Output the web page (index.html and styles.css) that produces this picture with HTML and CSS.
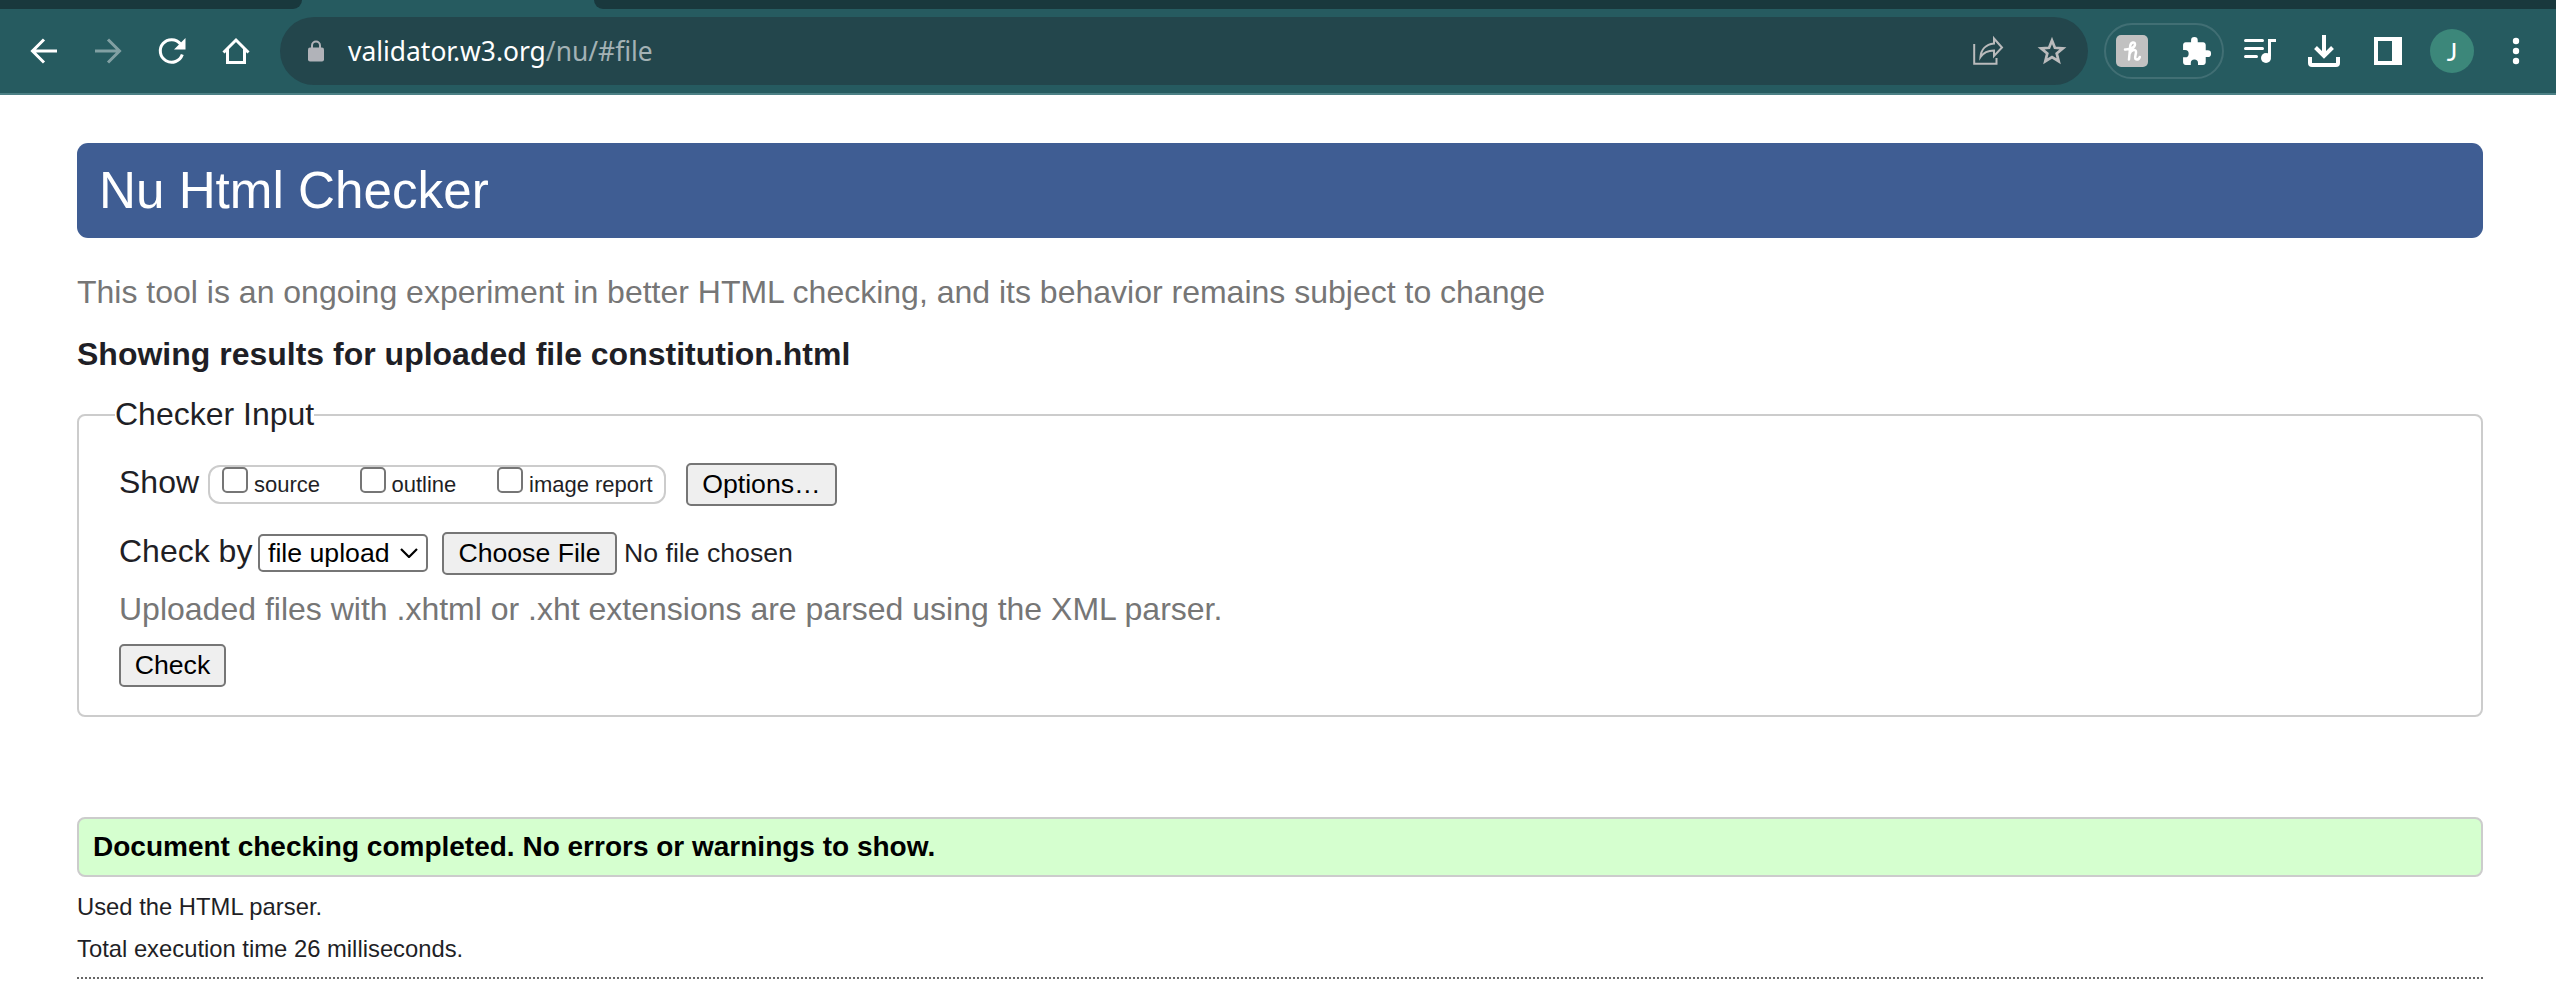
FILE: index.html
```html
<!DOCTYPE html>
<html lang="en">
<head>
<meta charset="utf-8">
<title>Nu Html Checker</title>
<link rel="stylesheet" href="styles.css">
</head>
<body>
<div class="browser">
  <div class="tabstrip"><div class="tab tab-left"></div><div class="tab tab-right"></div></div>
  <div class="toolbar">
    <svg class="nav" viewBox="0 0 32 32"><path d="M29 16H5M16 4.500L4.500 16 16 27.500" fill="none" stroke="#fff" stroke-width="3"/></svg>
    <svg class="nav dim" viewBox="0 0 32 32"><path d="M3 16h24M16 4.500L27.500 16 16 27.500" fill="none" stroke="#fff" stroke-width="3"/></svg>
    <svg class="nav" viewBox="0 0 32 32"><path d="M26.300 19.500A11.300 11.300 0 1 1 24.500 9" fill="none" stroke="#fff" stroke-width="3"/><path d="M29.500 3v11.500H18z" fill="#fff"/></svg>
    <svg class="nav" viewBox="0 0 32 32"><path d="M3.500 17.500L16 5l12.500 12.500M7.500 14v13.500h17V14" fill="none" stroke="#fff" stroke-width="3"/></svg>
    <div class="omnibox">
      <svg class="lock" viewBox="0 0 16 22"><path d="M4 9V5.500a4 4 0 0 1 8 0V9" fill="none" stroke="#b1b3b9" stroke-width="2"/><rect y="7.500" width="16" height="14" rx="2" fill="#b1b3b9"/></svg>
      <span class="url">validator.w3.org<span class="path">/nu/#file</span></span>
      <svg class="share" viewBox="0 0 32 32"><path d="M2.200 9v19.800h22.300V23M22 3.500l8 9-8 8.500v-5.500c-7 0-10.500 2-13.500 6.500.5-7 5-12.500 13.500-13.500z" fill="none" stroke="#babbbc" stroke-width="2"/></svg>
      <svg class="star" viewBox="0 0 32 32"><path d="M16 5.500l2.900 7.300 8 .5-6.200 5.100 2 7.800L16 22l-6.700 4.200 2-7.800-6.200-5.100 8-.5z" fill="none" stroke="#babbbc" stroke-width="2.700"/></svg>
    </div>
    <div class="extensions">
      <svg class="ext" viewBox="0 0 32 32"><rect width="32" height="32" rx="5" fill="#c1c1c1"/><path d="M9 14.500c5 .2 10-1.800 10-5.300 0-2.800-4-2.300-4.700 1.300L13 24.500M13.500 19c1.500-4.500 7-5.500 6.500-1.500-.4 3-2 7 .8 7 1.500 0 2.500-1 3-2.500" fill="none" stroke="#fff" stroke-width="2.500" stroke-linecap="round"/></svg>
      <svg class="ext" viewBox="0 0 24 24"><path transform="translate(.3 .5)" d="M20.500 11H19V7c0-1.100-.9-2-2-2h-4V3.500a2.500 2.500 0 0 0-5 0V5H4c-1.100 0-2 .9-2 2v3.800h1.500a2.700 2.700 0 0 1 0 5.400H2V20c0 1.100.9 2 2 2h3.800v-1.500a2.700 2.700 0 0 1 5.400 0V22H17c1.100 0 2-.9 2-2v-4h1.500a2.500 2.500 0 0 0 0-5z" fill="#fff"/></svg>
    </div>
    <svg class="tool" viewBox="0 0 32 32"><path d="M1.500 5.500h17M1.500 13.500h17M1.500 21.500h11M25.500 21V5.500H32" fill="none" stroke="#fff" stroke-width="3" stroke-linecap="round"/><circle cx="22" cy="23" r="5" fill="#fff"/></svg>
    <svg class="tool" viewBox="0 0 32 32"><path d="M16 0v20M7.500 12.500L16 21l8.500-8.500" fill="none" stroke="#fff" stroke-width="4"/><path d="M2 22v6c0 1.500.5 2 2 2h24c1.500 0 2-.5 2-2v-6" fill="none" stroke="#fff" stroke-width="4"/></svg>
    <svg class="tool" viewBox="0 0 32 32"><path fill="#fff" fill-rule="evenodd" d="M2 2h28v28H2zM6 6v20h14V6z"/></svg>
    <div class="avatar">J</div>
    <svg class="dots" viewBox="0 0 8 32"><circle cx="4" cy="6" r="3.200" fill="#fff"/><circle cx="4" cy="16" r="3.200" fill="#fff"/><circle cx="4" cy="26" r="3.200" fill="#fff"/></svg>
  </div>
</div>
<main class="page">
  <h1 class="title">Nu Html Checker</h1>
  <p class="intro">This tool is an ongoing experiment in better HTML checking, and its behavior remains subject to change</p>
  <h2 class="results-for">Showing results for uploaded file constitution.html</h2>
  <fieldset class="input">
    <legend>Checker Input</legend>
    <div class="row">
      <span class="label show">Show</span>
      <div class="checks">
        <label class="check source"><span class="box"></span>source</label>
        <label class="check outline"><span class="box"></span>outline</label>
        <label class="check"><span class="box"></span>image report</label>
      </div>
      <button class="btn options">Options…</button>
    </div>
    <div class="row second">
      <span class="label by">Check by</span>
      <div class="select">file upload<svg class="chevron" viewBox="0 0 18 10"><path d="M1 1l8 8 8-8" fill="none" stroke="#000" stroke-width="2.200"/></svg></div>
      <button class="btn choose">Choose File</button>
      <span class="nofile">No file chosen</span>
    </div>
    <p class="note">Uploaded files with .xhtml or .xht extensions are parsed using the XML parser.</p>
    <button class="btn submit">Check</button>
  </fieldset>
  <p class="success">Document checking completed. No errors or warnings to show.</p>
  <p class="stat">Used the HTML parser.</p>
  <p class="stat">Total execution time 26 milliseconds.</p>
  <div class="rule"></div>
</main>
</body>
</html>
```
FILE: styles.css
```css
* { box-sizing: border-box; }
body { margin: 0; height: 985px; overflow: hidden; background: #fff; color: #1f1f26; font-family: "Liberation Sans", Arial, sans-serif; }
h1, h2, p { margin: 0; }
svg { display: block; flex: none; }
.browser { height: 95px; background: #265b60; border-bottom: 2px solid #4c8085; }
.tabstrip { height: 9px; display: flex; justify-content: space-between; }
.tab { background: #19383d; }
.tab-left { width: 302px; border-bottom-right-radius: 9px 9px; }
.tab-right { width: 1962px; border-bottom-left-radius: 9px 9px; }
.toolbar { height: 84px; display: flex; align-items: center; padding-left: 28px; }
.nav { width: 32px; height: 32px; margin-right: 32px; }
.nav:nth-child(4) { margin-right: 28px; }
.dim { opacity: .42; }
.omnibox { width: 1808px; height: 68px; border-radius: 34px; background: #23464c; display: flex; align-items: center; padding-left: 28px; }
.lock { width: 16px; height: 22px; }
.url { flex: 1; margin-left: 24px; color: #fff; font: 26.400px/40px "Noto Sans", "Open Sans", sans-serif; white-space: nowrap; }
.path { color: #a3b2b5; }
.share { width: 32px; height: 32px; margin-right: 32px; }
.star { width: 32px; height: 32px; margin-right: 20px; }
.extensions { width: 120px; height: 56px; margin-left: 16px; border: 2px solid #416f74; border-radius: 28px; display: flex; align-items: center; justify-content: space-between; padding: 0 10px; }
.ext { width: 32px; height: 32px; }
.tool { width: 32px; height: 32px; margin-left: 32px; }
.extensions + .tool { margin-left: 20px; }
.avatar { width: 44px; height: 44px; margin-left: 26px; border-radius: 50%; background: #3c877a; color: #fff; font: 25px/44px Lato, sans-serif; text-align: center; }
.dots { width: 8px; height: 32px; margin-left: 38px; }
.page { padding: 48px 73px 0 77px; }
.title { height: 95px; padding-left: 22px; border-radius: 11px; background: #3f5d93; color: #fff; font-size: 51.200px; font-weight: 400; line-height: 95px; }
.intro { margin-top: 34px; color: #767676; font-size: 32px; line-height: 40px; }
.results-for { margin-top: 22px; font-size: 32px; line-height: 40px; }
.input { margin: 20px 0 0; height: 323px; padding: 27px 40px 0; border: 2px solid #ccc; border-radius: 8px; }
.input legend { height: 42px; margin-left: -4px; padding: 0; font-size: 32px; line-height: 40px; }
.row { height: 43px; display: flex; align-items: flex-start; white-space: nowrap; }
.second { margin-top: 26px; }
.label { font-size: 32px; line-height: 38px; }
.show { width: 89px; }
.by { width: 139px; }
.checks { width: 458px; height: 39px; margin-top: 2px; border: 2px solid #ccc; border-radius: 12px; padding-left: 12px; display: flex; }
.check { display: flex; font-size: 22px; line-height: 36px; }
.box { width: 26px; height: 26px; margin-right: 6px; border: 2px solid #767676; border-radius: 5px; background: #fff; }
.source, .outline { width: 137.500px; }
.btn { height: 43px; padding: 0; border: 2px solid #767676; border-radius: 5px; background: #efefef; color: #000; font: 26.670px/39px "Liberation Sans", Arial, sans-serif; text-align: center; }
.options { width: 151px; margin-left: 20px; }
.select { width: 170px; height: 38px; margin-top: 2px; padding: 0 8px; border: 2px solid #767676; border-radius: 5px; display: flex; align-items: center; justify-content: space-between; color: #000; font-size: 26.670px; line-height: 34px; }
.chevron { width: 18px; height: 10px; }
.choose { width: 175px; margin-left: 14px; }
.nofile { margin-left: 7px; font-size: 26.670px; line-height: 42px; }
.note { margin-top: 14px; color: #767676; font-size: 32px; line-height: 40px; }
.submit { display: block; width: 107px; margin-top: 15px; }
.success { height: 60px; margin-top: 100px; padding-left: 14px; border: 2px solid #ccc; border-radius: 8px; background: #d5ffcf; color: #000; font-size: 28px; font-weight: 700; line-height: 56px; }
.stat { font-size: 23.800px; line-height: 42px; }
.success + .stat { margin-top: 9px; }
.rule { margin-top: 7px; border-top: 2px dotted #666; }
```
